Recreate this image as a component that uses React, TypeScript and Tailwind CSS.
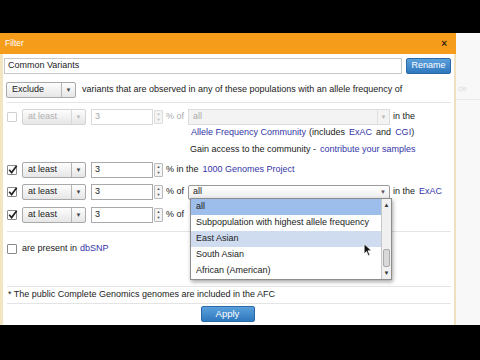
import React from 'react';

const font = { fontFamily: '"Liberation Sans", Arial, sans-serif' };

function Select({ label, width, disabled = false }: { label: string; width: number; disabled?: boolean }) {
    return (
        <div
            className={`flex h-[16px] items-stretch rounded-[2px] border ${disabled ? 'border-[#d4d4d4] text-[#b0b0b0]' : 'border-[#a9a9a9] text-[#222]'} bg-gradient-to-b from-[#fdfdfd] to-[#e6e6e6]`}
            style={{ width }}
        >
            <div className="flex flex-1 items-center pl-[5px]">{label}</div>
            <div className={`flex w-[14px] items-center justify-center border-l ${disabled ? 'border-[#d8d8d8]' : 'border-[#b5b5b5]'}`}>
                <span className={`text-[6px] ${disabled ? 'text-[#bbb]' : 'text-[#444]'}`}>▼</span>
            </div>
        </div>
    );
}

function NumberBox({ disabled = false }: { disabled?: boolean }) {
    return (
        <div className="flex items-center gap-[1px]">
            <div className={`flex h-[16px] w-[62px] items-center border bg-white pl-[3px] ${disabled ? 'border-[#dadada] text-[#aaa]' : 'border-[#aaa] text-[#222]'}`}>
                3
            </div>
            <div className={`flex h-[14px] w-[9px] flex-col items-center justify-center rounded-[1px] border ${disabled ? 'border-[#ddd] text-[#bbb]' : 'border-[#bbb] text-[#555]'} bg-[#f4f4f4] text-[4px] leading-[6px]`}>
                <span>▲</span>
                <span>▼</span>
            </div>
        </div>
    );
}

function Check({ checked = false, disabled = false }: { checked?: boolean; disabled?: boolean }) {
    return (
        <div className={`relative h-[10px] w-[10px] rounded-[1px] border bg-white ${disabled ? 'border-[#d0d0d0]' : 'border-[#8a8a8a]'}`}>
            {checked && (
                <svg viewBox="0 0 10 10" className="absolute -left-[1px] -top-[2px] h-[11px] w-[11px]">
                    <path d="M2 5.2 L4.2 7.8 L8.8 1.5" fill="none" stroke="#222" strokeWidth="1.5" />
                </svg>
            )}
        </div>
    );
}

function Link({ children }: { children: React.ReactNode }) {
    return <span className="text-[#3535a8]">{children}</span>;
}

export default function App() {
    const options = ['all', 'Subpopulation with highest allele frequency', 'East Asian', 'South Asian', 'African (American)'];

    return (
        <div className="flex h-[360px] w-[480px] flex-col bg-black text-[9px] text-[#222]" style={font}>
            <div className="h-[33px] shrink-0" />
            <div className="flex h-[292px] shrink-0">
                <div className="relative flex w-[456px] flex-col">
                    {/* title bar */}
                    <div className="flex h-[21px] shrink-0 items-center justify-between bg-[#f59c1a] pl-[5px] pr-[9px] text-white">
                        <span className="text-[8.5px]">Filter</span>
                        <span className="text-[10px] font-bold text-[#3a2a10]">×</span>
                    </div>

                    {/* body */}
                    <div className="flex min-h-0 flex-1 flex-col border-l-[3px] border-r-[2px] border-l-[#f3e5c2] border-r-[#f0e2c0] bg-white pl-[4px] pr-[3px]">
                        <div className="-ml-[3px] mt-[4px] flex h-[16px] shrink-0 gap-[4px]">
                            <div className="flex flex-1 items-center border border-[#c8c8c8] bg-white pl-[3px] text-[9px]">Common Variants</div>
                            <div className="flex w-[45px] items-center justify-center rounded-[2px] border border-[#2b6aa8] bg-gradient-to-b from-[#5aa0dc] to-[#2f78bd] text-[9px] text-white">
                                Rename
                            </div>
                        </div>

                        <div className="mt-[8px] flex h-[16px] shrink-0 items-center gap-[6px]">
                            <div className="-ml-[1px]">
                                <Select label="Exclude" width={70} />
                            </div>
                            <span>variants that are observed in any of these populations with an allele frequency of</span>
                        </div>

                        <div className="mt-[4px] h-px shrink-0 bg-[#e4e4e4]" />

                        <div className="mt-[6px] flex h-[16px] shrink-0 items-center">
                            <Check disabled />
                            <div className="ml-[5px]">
                                <Select label="at least" width={64} disabled />
                            </div>
                            <div className="ml-[5px]">
                                <NumberBox disabled />
                            </div>
                            <span className="ml-[3px] text-[#aaa]">% of</span>
                            <div className="ml-[4px] flex h-[16px] w-[202px] items-center border border-[#dcdcdc] bg-[#f3f3f3] pl-[4px] text-[#aaa]">
                                <span className="flex-1">all</span>
                                <span className="flex h-full w-[12px] items-center justify-center border-l border-[#e0e0e0] text-[6px] text-[#bbb]">▼</span>
                            </div>
                            <span className="ml-[3px]">in the</span>
                        </div>

                        <div className="ml-[184px] mt-[1px] flex h-[14px] shrink-0 items-center">
                            <Link>Allele Frequency Community</Link>
                            <span className="ml-[3px]">(includes</span>
                            <span className="ml-[4px]"><Link>ExAC</Link></span>
                            <span className="ml-[4px]">and</span>
                            <span className="ml-[4px]"><Link>CGI</Link>)</span>
                        </div>
                        <div className="ml-[183px] mt-[3px] flex h-[14px] shrink-0 items-center">
                            <span>Gain access to the community -</span>
                            <span className="ml-[4px]"><Link>contribute your samples</Link></span>
                        </div>

                        <div className="mt-[5px] flex h-[16px] shrink-0 items-center">
                            <Check checked />
                            <div className="ml-[5px]"><Select label="at least" width={64} /></div>
                            <div className="ml-[5px]"><NumberBox /></div>
                            <span className="ml-[3px]">% in the</span>
                            <span className="ml-[4px]"><Link>1000 Genomes Project</Link></span>
                        </div>

                        <div className="mt-[6px] flex h-[16px] shrink-0 items-center">
                            <Check checked />
                            <div className="ml-[5px]"><Select label="at least" width={64} /></div>
                            <div className="ml-[5px]"><NumberBox /></div>
                            <span className="ml-[3px]">% of</span>
                            <div className="ml-[4px] flex h-[15px] w-[202px] items-center rounded-[2px] border border-[#9a9a9a] bg-gradient-to-b from-white to-[#ececec] pl-[4px]">
                                <span className="flex-1">all</span>
                                <span className="flex h-full w-[12px] items-center justify-center text-[6px] text-[#555]">▼</span>
                            </div>
                            <span className="ml-[3px]">in the</span>
                            <span className="ml-[4px]"><Link>ExAC</Link></span>
                        </div>

                        <div className="mt-[7px] flex h-[16px] shrink-0 items-center">
                            <Check checked />
                            <div className="ml-[5px]"><Select label="at least" width={64} /></div>
                            <div className="ml-[5px]"><NumberBox /></div>
                            <span className="ml-[3px]">% of</span>
                        </div>

                        <div className="mt-[8px] h-px shrink-0 bg-[#e4e4e4]" />

                        <div className="mt-[10px] flex h-[14px] shrink-0 items-center">
                            <Check />
                            <span className="ml-[5px]">are present in</span>
                            <span className="ml-[3px]"><Link>dbSNP</Link></span>
                        </div>

                        <div className="mt-[30px] flex h-[18px] shrink-0 items-center border-y border-[#e4e4e4] pl-[1px]">
                            * The public Complete Genomics genomes are included in the AFC
                        </div>

                        <div className="mt-[2px] flex shrink-0 justify-center pr-[3px]">
                            <div className="flex h-[16px] w-[54px] items-center justify-center rounded-[2px] border border-[#2b6aa8] bg-gradient-to-b from-[#5aa0dc] to-[#2f78bd] text-[9.5px] text-white">
                                Apply
                            </div>
                        </div>
                    </div>

                    {/* open dropdown list */}
                    <div className="absolute left-[190px] top-[165px] w-[202px] border border-[#8d8d8d] bg-white shadow-[1px_2px_4px_rgba(0,0,0,0.35)]">
                        <div className="flex">
                            <div className="flex-1">
                                {options.map((o, i) => (
                                    <div
                                        key={o}
                                        className={`flex h-[16px] items-center pl-[5px] ${i === 0 ? 'bg-[#9dbdeb]' : i === 2 ? 'bg-[#cfdcf0]' : ''}`}
                                    >
                                        {o}
                                    </div>
                                ))}
                            </div>
                            <div className="flex w-[10px] flex-col border-l border-[#c8c8c8] bg-[#f0f0f0]">
                                <div className="flex h-[12px] items-center justify-center text-[6px] text-[#333]">▲</div>
                                <div className="flex-1" />
                                <div className="mx-[1px] h-[18px] rounded-[2px] border border-[#aaa] bg-[#d8d8d8]" />
                                <div className="flex h-[12px] items-center justify-center text-[6px] text-[#333]">▼</div>
                            </div>
                        </div>
                    </div>

                    {/* mouse cursor */}
                    <svg viewBox="0 0 12 18" className="absolute left-[363px] top-[210px] h-[14px] w-[10px]">
                        <path d="M1 1 L1 14 L4 11 L6.5 16.5 L8.5 15.5 L6 10 L10.5 10 Z" fill="#111" stroke="#fff" strokeWidth="1" />
                    </svg>
                </div>

                {/* page behind */}
                <div className="flex flex-1 flex-col bg-[#f8f8f8] pt-[51px] text-[7px] text-[#ddd]">
                    <div className="border-b border-[#ececec] pb-[4px] pl-[2px]">cle</div>
                </div>
            </div>
            <div className="flex-1" />
        </div>
    );
}
